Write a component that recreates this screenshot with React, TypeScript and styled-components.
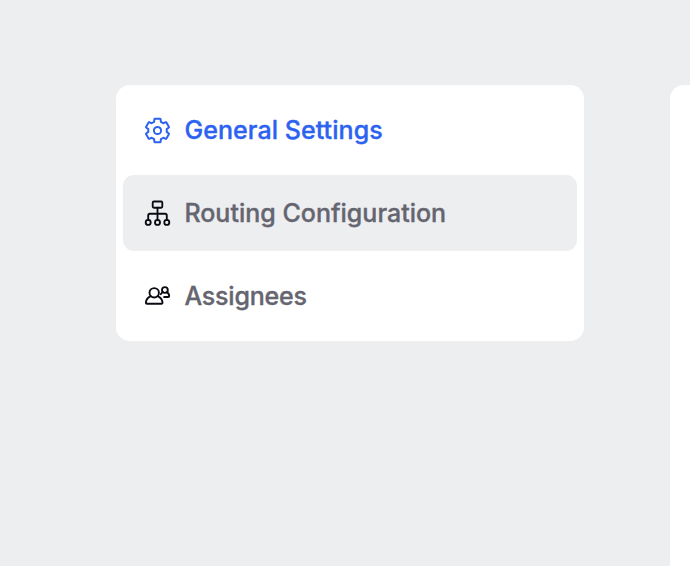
import React from "react";
import styled, { createGlobalStyle } from "styled-components";

const GlobalStyle = createGlobalStyle`
  * { box-sizing: border-box; }
  body { margin: 0; background: #edeef0; overflow: hidden; }
`;

const Page = styled.main`
  display: flex;
  align-items: flex-start;
  gap: 86px;
  height: 566px;
  padding: 85px 0 0 116px;
  overflow: hidden;
  background: #edeef0;
  font-family: Inter, "Liberation Sans", sans-serif;
`;

const SideMenu = styled.nav`
  display: flex;
  flex: 0 0 468px;
  flex-direction: column;
  gap: 7px;
  padding: 7px;
  border-radius: 14px;
  background: #fff;
`;

const MenuItem = styled.a<{ $active?: boolean; $hovered?: boolean }>`
  display: flex;
  align-items: center;
  gap: 12.4px;
  height: 76px;
  padding: 0 20px;
  border-radius: 11px;
  background: ${(p) => (p.$hovered ? "#edeef0" : "transparent")};
  color: ${(p) => (p.$active ? "#2c62f0" : "#656570")};
`;

const Label = styled.span<{ $spacing: number }>`
  font-size: 25px;
  font-weight: 500;
  line-height: 36px;
  letter-spacing: ${(p) => p.$spacing}px;
  white-space: nowrap;
  -webkit-text-stroke: 0.35px currentColor;
`;

const Icon = styled.svg<{ $color: string }>`
  flex: none;
  width: 29px;
  height: 29px;
  fill: none;
  stroke: ${(p) => p.$color};
  stroke-linecap: round;
  stroke-linejoin: round;
`;

const ContentPanel = styled.section`
  flex: 0 0 600px;
  align-self: stretch;
  border-radius: 14px 0 0 0;
  background: #fff;
`;

const gearOutline = (() => {
  const tooth = [[-4.6, -8], [-3.4, -8.7], [-3.1, -11.3], [-2.7, -11.7], [2.7, -11.7], [3.1, -11.3], [3.4, -8.7]];
  const points: string[] = [];
  for (let i = 0; i < 6; i++) {
    const a = (i * Math.PI) / 3;
    for (const [x, y] of tooth) {
      const px = x * Math.cos(a) - y * Math.sin(a);
      const py = x * Math.sin(a) + y * Math.cos(a);
      points.push(`${px.toFixed(2)} ${py.toFixed(2)}`);
    }
  }
  return `M${points.join("L")}Z`;
})();

const GearIcon = () => (
  <Icon $color="#2c62f0" viewBox="-14.5 -14.5 29 29" strokeWidth="2">
    <path d={gearOutline} />
    <circle r="3.6" />
  </Icon>
);

const RoutingIcon = () => (
  <Icon $color="#0b0b14" viewBox="0 0 29 29" strokeWidth="1.85">
    <rect x="9.7" y="2.5" width="9.6" height="6.2" rx="1.2" />
    <path d="M14.5 8.7V21M5.2 21v-4.6q0-1.7 1.7-1.7h15.2q1.7 0 1.7 1.7V21" />
    <circle cx="5.2" cy="23.4" r="2.5" />
    <circle cx="14.5" cy="23.4" r="2.5" />
    <circle cx="23.8" cy="23.4" r="2.5" />
  </Icon>
);

const PeopleIcon = () => (
  <Icon $color="#0b0b14" viewBox="0 0 29 29" strokeWidth="1.9">
    <circle cx="11.2" cy="10.8" r="4.7" />
    <path d="M7.8 14.2C5 15.4 3.2 17.6 2.9 20.4q-.1 1.3 1.1 1.3h14.4q1.2 0 1.1-1.3c-.3-2.8-2.1-5-4.9-6.2" />
    <circle cx="21.9" cy="8" r="2.9" />
    <path d="M17.8 12.2q.8-1.6 2.3-2M23.6 10.2c1.7.7 2.5 2.1 2.6 3.8q0 1-1 1h-4.1" />
  </Icon>
);

export default function App() {
  return (
    <>
      <GlobalStyle />
      <Page>
        <SideMenu>
          <MenuItem $active>
            <GearIcon />
            <Label $spacing={0.07}>General Settings</Label>
          </MenuItem>
          <MenuItem $hovered>
            <RoutingIcon />
            <Label $spacing={0.01}>Routing Configuration</Label>
          </MenuItem>
          <MenuItem>
            <PeopleIcon />
            <Label $spacing={-0.2}>Assignees</Label>
          </MenuItem>
        </SideMenu>
        <ContentPanel />
      </Page>
    </>
  );
}
